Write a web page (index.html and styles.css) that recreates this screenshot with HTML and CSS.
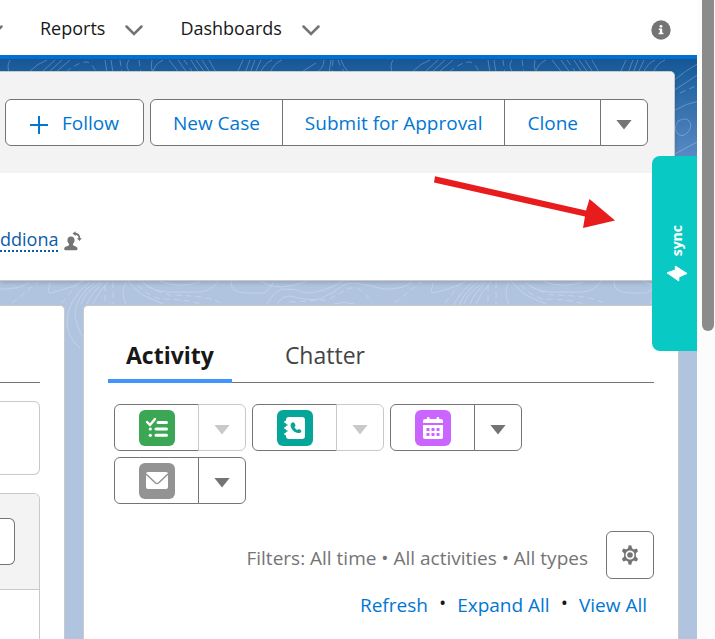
FILE: index.html
```html
<!DOCTYPE html>
<html lang="en">

<head>
  <meta charset="UTF-8">
  <meta name="viewport" content="width=device-width, initial-scale=1">
  <title>Account | Salesforce</title>
  <link rel="stylesheet" href="styles.css">
</head>

<body>
  <div class="app">
    <div class="page">

      <!-- navigation bar -->
      <header class="navbar">
        <nav class="nav">
          <button class="nav-more" aria-label="More"><svg class="chevron" viewBox="0 0 18 11"><path d="M1.500 1.500 9 9l7.500-7.500"/></svg></button>
          <div class="nav-item">
            <a href="#">Reports</a>
            <button aria-label="Reports list"><svg class="chevron" viewBox="0 0 18 11"><path d="M1.500 1.500 9 9l7.500-7.500"/></svg></button>
          </div>
          <div class="nav-item">
            <a href="#">Dashboards</a>
            <button aria-label="Dashboards list"><svg class="chevron" viewBox="0 0 18 11"><path d="M1.500 1.500 9 9l7.500-7.500"/></svg></button>
          </div>
        </nav>
        <button class="info" aria-label="Information">
          <svg viewBox="0 0 20 20"><circle cx="10" cy="10" r="9.700" fill="#747474"/><circle cx="10" cy="6.300" r="1.400" fill="#fff"/><path d="M7.800 8.500h3.400v4.300h1.200v1.400H7.600v-1.400h1.200V9.900h-1z" fill="#fff"/></svg>
        </button>
      </header>

      <main class="main">
        <!-- contour lines -->
        <svg class="contours" aria-hidden="true">
          <defs>
            <pattern id="topo" width="383" height="400" patternUnits="userSpaceOnUse">
              <g fill="none" stroke="#fff" stroke-width="1">
                <path d="M10 1q-4 6 0 14M29 13Q38 4 47 1M42 13 55 1M49 13 62 1M56 13 70 1M105 1l2 13M111 1l2 13M129 1q-5 6 2 14M152 1q-2 6 1 14M163 1q-10 5-10 14M169 1l11 14M178 1l10 14M191 1l9 14M196 1l10 14M202 1l9 14M209 1l8 14M237 14 243 1M245 14 250 1M250 14 255 1M255 14 261 1M260 14q5-10 12-13M270 14q4-10 12-13M315 14q9-4 9-13M331 1l-2 13M341 1q2 6 8 13"/>
                <path stroke-dasharray="6 4" d="M66 13Q78 3 87 3q6 2 10 12M120 1l2 14M139 1l2 14M184 1l10 14M333 1l-1 13M338 1q2 7 8 13M297 34l18-8"/>
                <path d="M290 22q12-10 26-18M290 32 316 15M290 52q14-8 26-10M295 62q8-4 11 0 4 5-1 11-5 6-10 2-5-5 0-13M290 96 316 82"/>
                <path d="M0 230q19 1 29-7M50 224q-1 5-2 8 0 3 6 1 20-5 29-11M90 223q-24 18-23 43 2 14 13 23M95 223q-18 14-20 29 0 14 8 26M100 223q-16 12-19 22M103 223q-12 12-16 22M108 223q-10 10-15 22M126 223q-6 12 0 22M128 222q10 12 19 16t16 7M142 223q10 9 25 10h33q12-1 18-11M160 222q18 8 40 1M231 222q-1 12 16 12h16q8-3 10-11M260 222q18 12 47 0M267 245q8-14 16-15 12-1 22 4 18 0 38-12M277 245q5-8 13-8 18 5 30 3 14-6 23-14 10-5 40 4M334 245q10-3 20 0"/>
                <path stroke-dasharray="6 4" d="M12 244 38 223M62 244l16-20M105 226v19M113 223v22M138 226q12 12 22 14 26 0 40 5M147 227q14 8 24 9 40 1 49 8M290 243q22-1 34-2 10-2 19-9 16-10 29 12"/>
              </g>
            </pattern>
          </defs>
          <rect width="100%" height="100%" fill="url(#topo)"/>
        </svg>

        <!-- record header -->
        <section class="record">
          <div class="record-actions">
            <button class="btn follow"><svg viewBox="0 0 18 18"><path d="M9 0v18M0 9h18"/></svg>Follow</button>
            <div class="btn-group">
              <button class="btn">New Case</button>
              <button class="btn">Submit for Approval</button>
              <button class="btn">Clone</button>
              <button class="btn more" aria-label="Show more actions"><i class="down"></i></button>
            </div>
          </div>
          <div class="record-fields">
            <a class="owner" href="#">ddiona</a>
            <button class="change-owner" aria-label="Change Owner">
              <svg viewBox="0 0 18 20"><path d="M7 5.500c2.200 0 3.600 1.600 3.600 3.800 0 1.500-.7 2.600-1.500 3.500-.5.800 0 1.500.8 1.900l2.300 1c.9.500 1.300 1.100 1.300 2 0 1-.8 1.600-1.700 1.600H1.900c-1 0-1.700-.7-1.700-1.600 0-.9.400-1.500 1.300-2l2.700-1c.8-.4 1.200-1.100.7-1.900-.9-1-1.500-2-1.500-3.500C3.400 7.100 4.800 5.500 7 5.500z"/><path d="M8.500 2.500 11.600.2v1.600c2.900.2 4.500 2.200 4.700 5.400h1.500l-2.300 2.800-2.600-2.800h1.700c-.2-1.900-1.200-3.100-3-3.400v1.300z"/></svg>
            </button>
          </div>
        </section>

        <div class="columns">
          <section class="card left">
            <div class="left-line"></div>
            <div class="left-box"></div>
            <div class="left-list">
              <div class="left-head"><button class="btn left-btn" aria-label="New"></button></div>
            </div>
          </section>

          <section class="card activity">
            <div class="tabs" role="tablist">
              <button class="tab active" role="tab" aria-selected="true">Activity</button>
              <button class="tab" role="tab" aria-selected="false">Chatter</button>
            </div>

            <div class="composer">
              <div class="btn-group">
                <button class="btn icon" aria-label="New Task">
                  <svg viewBox="0 0 36 36"><rect width="36" height="36" rx="6" fill="#3ba755"/><path d="m8 12 3 3L16 9" fill="none" stroke="#fff" stroke-width="2.400" stroke-linecap="round"/><path d="M19 12.500h8.500M17 19h10.500M17 25.300h10.500" stroke="#fff" stroke-width="3" stroke-linecap="round"/><circle cx="11.300" cy="19" r="1.600" fill="#fff"/><circle cx="11.300" cy="25.300" r="1.600" fill="#fff"/></svg>
                </button>
                <button class="btn more" disabled aria-label="More task actions"><i class="down"></i></button>
              </div>
              <div class="btn-group">
                <button class="btn icon" aria-label="Log a Call">
                  <svg viewBox="0 0 36 36"><rect width="36" height="36" rx="6" fill="#06a59a"/><rect x="9" y="7" width="19" height="22" rx="3" fill="#fff"/><path d="M8.500 12h3M8.500 18h3M8.500 24h3" stroke="#fff" stroke-width="2.500" stroke-linecap="round"/><path d="M9 15h1.500M9 21h1.500" stroke="#06a59a" stroke-width="1.500"/><path d="M14.200 13.200c-2.200 2.800 1.800 10.300 8.500 9.800 1.500-.2 2.200-2 1.100-2.900l-1.900-1.100-1.700 1.100c-1.200-.6-2.300-1.700-2.700-3.100l1.100-1.500-1.100-2.500c-.7-1.200-2.500-1-3.300.2z" fill="#06a59a"/></svg>
                </button>
                <button class="btn more" disabled aria-label="More call actions"><i class="down"></i></button>
              </div>
              <div class="btn-group">
                <button class="btn icon" aria-label="New Event">
                  <svg viewBox="0 0 36 36"><rect width="36" height="36" rx="6" fill="#cb65ff"/><path d="M8 13v-2q0-2 2-2h2V8q0-1 1.300-1t1.300 1v1h7V8q0-1 1.300-1t1.300 1v1H26q2 0 2 2v2z" fill="#fff"/><path d="M8 15h20v12q0 2-2 2H10q-2 0-2-2z" fill="#fff"/><path d="M11.500 19.500h13M11.500 24.500h13" stroke="#cb65ff" stroke-width="3" stroke-dasharray="3 2"/></svg>
                </button>
                <button class="btn more" aria-label="More event actions"><i class="down"></i></button>
              </div>
              <div class="btn-group">
                <button class="btn icon" aria-label="Email">
                  <svg viewBox="0 0 36 36"><rect width="36" height="36" rx="6" fill="#939393"/><rect x="7" y="9" width="22" height="17" rx="2" fill="#fff"/><path d="m7 11 9.500 9q1.500 1.200 3 0L29 11" fill="none" stroke="#939393" stroke-width="1.500"/></svg>
                </button>
                <button class="btn more" aria-label="More email actions"><i class="down"></i></button>
              </div>
            </div>

            <div class="filters">
              <p>Filters: All time • All activities • All types</p>
              <button class="btn settings" aria-label="Timeline Settings">
                <svg viewBox="0 0 20 20"><path fill-rule="evenodd" d="M8.600.6q1.400-.5 2.800 0l.6 2.700 1.800 1.100 2.700-.8q1.200 1 1.500 2.600l-2.100 2v3.600l2.100 2q-.3 1.600-1.500 2.600l-2.700-.8-1.800 1.100-.6 2.700q-1.400.5-2.800 0L8 16.700l-1.800-1.100-2.700.8Q2.300 15.400 2 13.800l2.100-2V8.200L2 6.200Q2.300 4.600 3.500 3.600l2.700.8L8 3.300zM10 5.500a4.500 4.500 0 1 0 0 9 4.500 4.500 0 0 0 0-9z"/><circle cx="10" cy="10" r="2.800"/></svg>
              </button>
            </div>
            <div class="links">
              <a href="#">Refresh</a><b>•</b><a href="#">Expand All</a><b>•</b><a href="#">View All</a>
            </div>
          </section>
        </div>
      </main>

      <button class="sync">
        <svg viewBox="0 0 22 17"><path d="M1 7.800 9.300 5V1L21 8.500 12.800 12v4z"/></svg>
        <span>sync</span>
      </button>

      <svg class="arrow" viewBox="0 0 182 54" aria-hidden="true"><path d="M2 1.300 153 35.500 156.500 24 182 45.500 150 53 152 41.500 1 7.500z"/></svg>
    </div>

    <div class="scrollbar"><div class="thumb"></div></div>
  </div>
</body>

</html>
```
FILE: styles.css
```css
* {
  box-sizing: border-box;
}

body {
  margin: 0;
  font-family: "Segoe UI", "Open Sans", sans-serif;
  font-size: 19px;
  line-height: 24px;
  color: #181818;
}

button {
  margin: 0;
  padding: 0;
  border: 0;
  background: none;
  font: inherit;
  color: inherit;
  cursor: pointer;
}

a {
  color: #0176d3;
  text-decoration: none;
}

svg {
  display: block;
}

.app {
  display: flex;
  height: 100vh;
  overflow: hidden;
}

.page {
  position: relative;
  flex: 1;
  min-width: 0;
  display: flex;
  flex-direction: column;
}

/* navigation */
.navbar {
  display: flex;
  justify-content: space-between;
  align-items: center;
  height: 59px;
  padding-right: 26px;
  border-bottom: 4px solid #0070d2;
  background: #fff;
}

.nav {
  display: flex;
  align-items: center;
  gap: 37px;
  margin-left: -15px;
  font-size: 18px;
}

.nav-item {
  display: flex;
  align-items: center;
  gap: 20px;
}

.nav-item a {
  color: #181818;
}

.chevron {
  width: 18px;
  height: 11px;
  margin-top: 5px;
  fill: none;
  stroke: #747474;
  stroke-width: 2.5;
  stroke-linecap: round;
}

.info svg {
  width: 20px;
  height: 20px;
  margin-top: 5px;
}

/* page background */
.main {
  position: relative;
  flex: 1;
  min-height: 0;
  display: flex;
  flex-direction: column;
  gap: 24px;
  padding-top: 12px;
  background: linear-gradient(#195594, #1b5f9e 12px, #5a8bc4 100px, #b0c4df 200px, #b0c4df);
}

.contours {
  position: absolute;
  top: 0;
  left: 0;
  width: 100%;
  height: 300px;
  opacity: .25;
}

/* record header */
.record {
  position: relative;
  margin-right: 22px;
  border: 1px solid #c9c9c9;
  border-left: 0;
  border-radius: 0 5px 0 0;
  background: #fff;
  box-shadow: 0 2px 4px rgba(0, 0, 0, .15);
  overflow: hidden;
}

.record-actions {
  display: flex;
  justify-content: flex-end;
  gap: 6px;
  padding: 27px 26px;
  background: #f3f3f3;
}

.record-fields {
  display: flex;
  align-items: center;
  gap: 6px;
  height: 107px;
}

.owner {
  color: #0b5cab;
  font-size: 18px;
  line-height: 22px;
  margin-top: 26px;
  border-bottom: 2px dotted #0b5cab;
}

.change-owner {
  margin-top: 28px;
}

.change-owner svg {
  width: 18px;
  height: 20px;
  fill: #747474;
}

/* buttons */
.btn {
  height: 47px;
  padding: 0 22px;
  border: 1px solid #747474;
  border-radius: 6px;
  background: #fff;
  color: #0176d3;
  white-space: nowrap;
}

.follow {
  display: flex;
  align-items: center;
  gap: 14px;
  padding: 0 24px;
}

.follow svg {
  width: 18px;
  height: 18px;
  margin-top: 4px;
  stroke: #0176d3;
  stroke-width: 2;
}

.btn-group {
  display: flex;
}

.btn-group .btn {
  border-radius: 0;
}

.btn-group .btn + .btn {
  margin-left: -1px;
}

.btn-group .btn:first-child {
  border-radius: 6px 0 0 6px;
}

.btn-group .btn:last-child {
  border-radius: 0 6px 6px 0;
}

.btn.more {
  width: 48px;
  padding: 0 15px;
}

.btn:disabled {
  border-color: #c9c9c9;
}

.down {
  display: block;
  width: 16px;
  height: 10px;
  margin-top: 4px;
  background: #747474;
  clip-path: polygon(0 0, 100% 0, 50% 100%);
}

.btn:disabled .down {
  background: #c9c9c9;
}

/* columns */
.columns {
  position: relative;
  flex: 1;
  min-height: 0;
  display: flex;
  gap: 18px;
  padding-right: 18px;
}

.card {
  border: 1px solid #c9c9c9;
  border-bottom: 0;
  border-radius: 5px 5px 0 0;
  background: #fff;
}

.left {
  flex: 0 0 65px;
  padding: 76px 24px 0 0;
  border-left: 0;
  border-top-left-radius: 0;
  display: flex;
  flex-direction: column;
  gap: 18px;
}

.left-line {
  border-top: 1px solid #747474;
}

.left-box {
  height: 74px;
  border: 1px solid #c9c9c9;
  border-left: 0;
  border-radius: 0 6px 6px 0;
}

.left-list {
  flex: 1;
  border: 1px solid #c9c9c9;
  border-width: 1px 1px 0 0;
  border-top-right-radius: 6px;
  overflow: hidden;
}

.left-head {
  display: flex;
  padding: 24px 24px 24px 0;
  border-bottom: 1px solid #c9c9c9;
  background: #f3f3f3;
}

.left-btn {
  flex: 1;
  padding: 0;
  border-left: 0;
  border-radius: 0 6px 6px 0;
}

.activity {
  flex: 1;
  min-width: 0;
  padding: 24px 24px 0;
}

.tabs {
  display: flex;
  gap: 35px;
  border-bottom: 1px solid #747474;
}

.tab {
  height: 53px;
  margin-bottom: -1px;
  padding: 0 18px;
  border-bottom: 4px solid transparent;
  font-size: 23px;
  color: #444;
}

.tab.active {
  border-color: #3f94fd;
  font-weight: 700;
  color: #181818;
}

.composer {
  display: flex;
  flex-wrap: wrap;
  gap: 6px;
  padding: 21px 90px 27px 6px;
}

.btn.icon {
  width: 85px;
  padding: 0 24px;
}

.btn.icon svg {
  width: 36px;
  height: 36px;
}

.filters {
  display: flex;
  justify-content: flex-end;
  align-items: center;
  gap: 18px;
  color: #747474;
}

.filters p {
  margin: 5px 0 0;
}

.settings {
  width: 48px;
  height: 48px;
  padding: 0 13px;
}

.settings svg {
  width: 20px;
  height: 20px;
  fill: #747474;
}

.links {
  display: flex;
  justify-content: flex-end;
  gap: 12px;
  padding: 14px 7px 0 0;
}

.links b {
  font-size: 14px;
  line-height: 20px;
}

/* side tab */
.sync {
  position: absolute;
  top: 156px;
  right: 0;
  width: 45px;
  height: 195px;
  padding-left: 5px;
  display: flex;
  flex-direction: column-reverse;
  align-items: center;
  justify-content: center;
  gap: 8px;
  border-radius: 8px 0 0 8px;
  background: #08c9c3;
  color: #fff;
  font-size: 14px;
  font-weight: 700;
  line-height: 20px;
}

.sync span {
  writing-mode: vertical-rl;
  transform: rotate(180deg);
}

.sync svg {
  width: 22px;
  height: 17px;
  fill: #fff;
  stroke: #fff;
  stroke-width: 1;
  stroke-linejoin: round;
}

.arrow {
  position: absolute;
  top: 175px;
  right: 82px;
  width: 182px;
  height: 54px;
  fill: #e81c1c;
}

/* scrollbar */
.scrollbar {
  flex: 0 0 18px;
  padding: 0 1px 0 5px;
  background: #fcfcfc;
}

.thumb {
  height: 331px;
  border-radius: 0 0 6px 6px;
  background: #8b8b8b;
}
```
